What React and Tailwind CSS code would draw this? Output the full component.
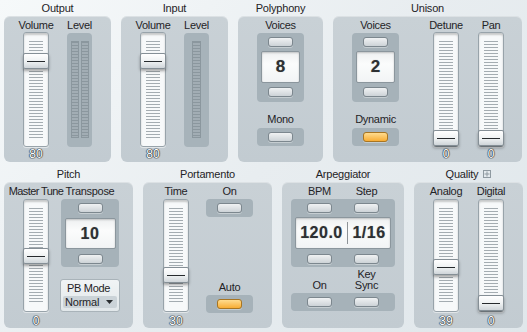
import React from "react";

const ticks =
  "bg-[image:repeating-linear-gradient(to_bottom,#a4acb1_0px,#a4acb1_1px,transparent_1px,transparent_3px)]";

const Label = ({ children, className = "" }) => (
  <span
    className={`h-[13px] leading-[13px] text-[11px] tracking-[-0.3px] text-[#1f2326] whitespace-nowrap ${className}`}
  >
    {children}
  </span>
);

const Value = ({ children, className = "" }) => (
  <span
    className={`leading-[13px] text-[12px] text-white [text-shadow:0_0_1px_#2f383e,0_0_1px_#2f383e,0_0_1px_#2f383e,0_0_1px_#2f383e] ${className}`}
  >
    {children}
  </span>
);

const Fader = ({ label, value, knob, tall, labelClass = "" }) => (
  <div className="flex flex-col items-center w-[26px]">
    <Label className={labelClass}>{label}</Label>
    <div
      className={`relative w-[26px] ${
        tall ? "h-[115px]" : "h-[113px] mt-[1px]"
      } rounded-[3px] border border-[#98a3aa] bg-[#f7f9fa] shadow-[inset_0_2px_2px_rgba(0,0,0,0.2),0_1px_0_rgba(255,255,255,0.5)]`}
    >
      <div className={`absolute left-[5px] right-[5px] top-[8px] bottom-[8px] ${ticks}`} />
      <div
        className="absolute left-[-1px] w-[26px] h-[16px] flex items-center justify-center rounded-[2px] border border-[#858f96] bg-[linear-gradient(to_bottom,#ffffff,#eef1f2_55%,#cfd5d9)] shadow-[0_2px_3px_rgba(0,0,0,0.35)]"
        style={{ top: knob }}
      >
        <div className="h-px w-[18px] bg-[#262a2d]" />
      </div>
    </div>
    <Value className={tall ? "mt-[1px]" : "mt-[3px]"}>{value}</Value>
  </div>
);

const Btn = ({ on }) => (
  <div
    className={`w-[25px] h-[10px] rounded-[3px] border ${
      on
        ? "border-[#a87522] bg-[linear-gradient(to_bottom,#ffdc8f,#f8ad35)]"
        : "border-[#7c878e] bg-[linear-gradient(to_bottom,#f0f2f3,#cdd3d7)]"
    } shadow-[0_1px_0_rgba(255,255,255,0.35)]`}
  />
);

const BtnBox = ({ on }) => (
  <div className="w-[47px] h-[18px] rounded-[4px] bg-[#a6b2b9] flex items-center justify-center">
    <Btn on={on} />
  </div>
);

const Display = ({ className = "", children }) => (
  <div
    className={`rounded-[2px] border border-[#8b969d] bg-[linear-gradient(to_bottom,#eef0f1,#fbfcfc_40%,#f2f4f5)] shadow-[inset_0_1px_2px_rgba(0,0,0,0.2)] flex items-center justify-center font-bold text-[#2d3033] [text-shadow:0_0_1px_rgba(0,0,0,0.35)] ${className}`}
  >
    {children}
  </div>
);

const Meter = ({ w }) => (
  <div
    className={`${w} h-[97px] border border-[#8b979e] bg-[#9aa6ad] bg-[image:repeating-linear-gradient(to_bottom,#8b979e_0px,#8b979e_1px,#a2adb4_1px,#a2adb4_3px)]`}
  />
);

const Level = ({ two }) => (
  <div className="flex flex-col items-center w-[25px]">
    <Label>Level</Label>
    <div className="mt-[1px] w-[25px] h-[114px] rounded-[4px] bg-[#a7b3ba] flex justify-center gap-[2px] pt-[8px]">
      {two ? (
        <>
          <Meter w="w-[8px]" />
          <Meter w="w-[8px]" />
        </>
      ) : (
        <Meter w="w-[9px]" />
      )}
    </div>
  </div>
);

const Voices = ({ value, bottomLabel, on }) => (
  <div className="flex flex-col items-center w-[47px]">
    <Label>Voices</Label>
    <div className="mt-[1px] w-[47px] h-[69px] rounded-[4px] bg-[#a6b2b9] flex flex-col items-center pt-[4px] gap-[4px]">
      <Btn />
      <Display className="w-[39px] h-[32px] text-[17px]">{value}</Display>
      <Btn />
    </div>
    <Label className="mt-[11px]">{bottomLabel}</Label>
    <div className="mt-[2px]">
      <BtnBox on={on} />
    </div>
  </div>
);

const Section = ({ title, width, children, panelClass = "" }) => (
  <div className={`flex flex-col ${width}`}>
    <div className="h-[16px] leading-[16px] text-[11px] tracking-[-0.2px] text-[#1f2326] text-center flex items-center justify-center gap-[5px]">
      {title}
    </div>
    <div
      className={`h-[146px] rounded-[6px] bg-[linear-gradient(to_bottom,#c9d1d6,#c2cbd1)] shadow-[inset_0_1px_0_rgba(255,255,255,0.35)] pt-[3px] ${panelClass}`}
    >
      {children}
    </div>
  </div>
);

export default function App() {
  return (
    <div className="w-[527px] h-[332px] overflow-hidden bg-[linear-gradient(135deg,#f6f9fa,#e8edf0_50%,#e0e7eb)] font-['Liberation_Sans',Arial,sans-serif] pl-[4px]">
      <div className="flex gap-[10px]">
        <Section title="Output" width="w-[107px]" panelClass="flex pl-[19px] gap-[18px]">
          <Fader label="Volume" value="80" knob={20} tall />
          <Level two />
        </Section>
        <Section title="Input" width="w-[107px]" panelClass="flex pl-[19px] gap-[18px]">
          <Fader label="Volume" value="80" knob={20} tall />
          <Level />
        </Section>
        <Section title="Polyphony" width="w-[85px]" panelClass="flex justify-center">
          <Voices value="8" bottomLabel="Mono" />
        </Section>
        <Section title="Unison" width="w-[189px]" panelClass="flex pl-[19px]">
          <Voices value="2" bottomLabel="Dynamic" on />
          <div className="ml-[34px]">
            <Fader label="Detune" value="0" knob={97} tall />
          </div>
          <div className="ml-[19px]">
            <Fader label="Pan" value="0" knob={97} tall />
          </div>
        </Section>
      </div>

      <div className="flex gap-[10px] mt-[4px]">
        <Section title="Pitch" width="w-[129px]" panelClass="flex pl-[19px]">
          <Fader label="Master Tune" value="0" knob={48} labelClass="!tracking-[-0.6px] text-[10.5px]" />
          <div className="ml-[12px] w-[58px] flex flex-col items-center">
            <Label>Transpose</Label>
            <div className="mt-[1px] w-[58px] h-[68px] rounded-[4px] bg-[#a6b2b9] flex flex-col items-center pt-[4px]">
              <Btn />
              <Display className="mt-[5px] w-[51px] h-[31px] text-[16px] tracking-[0.5px]">10</Display>
              <div className="mt-[5px]">
                <Btn />
              </div>
            </div>
            <div className="mt-[12px] w-[60px] h-[33px] shrink-0 rounded-[3px] border border-[#a9b3b9] bg-[linear-gradient(to_bottom,#f1f4f5,#e1e7ea)] px-[2px] pt-[2px]">
              <div className="pl-[4px] h-[12px] leading-[12px] text-[11px] tracking-[-0.3px] text-[#1f2326]">PB Mode</div>
              <div className="mt-[2px] h-[12px] rounded-[2px] bg-[#cbd3d8] flex items-center justify-between pl-[2px] pr-[4px]">
                <span className="text-[11px] tracking-[-0.2px] leading-[12px] text-[#1f2326]">Normal</span>
                <svg width="7" height="4" viewBox="0 0 7 4">
                  <path d="M0 0H7L3.5 4Z" fill="#2a2e31" />
                </svg>
              </div>
            </div>
          </div>
        </Section>

        <Section title="Portamento" width="w-[129px]" panelClass="flex pl-[20px]">
          <Fader label="Time" value="30" knob={67} />
          <div className="ml-[17px] w-[47px] flex flex-col items-center">
            <Label>On</Label>
            <div className="mt-[1px]">
              <BtnBox />
            </div>
            <Label className="mt-[64px]">Auto</Label>
            <div className="mt-[1px]">
              <BtnBox on />
            </div>
          </div>
        </Section>

        <Section title="Arpeggiator" width="w-[122px]" panelClass="pl-[9px]">
          <div className="w-[104px] flex flex-col">
            <div className="flex pl-[16px] gap-[22px]">
              <div className="w-[25px] flex justify-center">
                <Label>BPM</Label>
              </div>
              <div className="w-[25px] flex justify-center">
                <Label>Step</Label>
              </div>
            </div>
            <div className="mt-[1px] h-[68px] rounded-[4px] bg-[#a6b2b9] pt-[4px] flex flex-col">
              <div className="flex pl-[16px] gap-[22px]">
                <Btn />
                <Btn />
              </div>
              <Display className="mt-[4px] mx-[4px] h-[32px] text-[16px] tracking-[0.5px] !justify-start">
                <div className="w-[51px] text-center">120.0</div>
                <div className="w-px h-[22px] bg-[#8e9397]" />
                <div className="flex-1 text-center">1/16</div>
              </Display>
              <div className="mt-[5px] flex pl-[16px] gap-[22px]">
                <Btn />
                <Btn />
              </div>
            </div>
            <div className="mt-[2px] flex pl-[16px] gap-[22px] items-end text-[11px] tracking-[-0.3px] leading-[11px] text-[#1f2326]">
              <div className="w-[25px] text-center">On</div>
              <div className="w-[25px] flex flex-col items-center">
                <span>Key</span>
                <span>Sync</span>
              </div>
            </div>
            <div className="mt-[2px] h-[18px] rounded-[4px] bg-[#a6b2b9] flex items-center pl-[16px] gap-[22px]">
              <Btn />
              <Btn />
            </div>
          </div>
        </Section>

        <Section
          title={
            <>
              <span>Quality</span>
              <svg width="8" height="8" viewBox="0 0 8 8">
                <rect x="0.5" y="0.5" width="7" height="7" fill="none" stroke="#8f9aa1" />
                <path d="M4 1.5V6.5M1.5 4H6.5" stroke="#8f9aa1" />
              </svg>
            </>
          }
          width="w-[109px]"
          panelClass="flex pl-[19px]"
        >
          <Fader label="Analog" value="39" knob={59} />
          <div className="ml-[19px]">
            <Fader label="Digital" value="0" knob={95} />
          </div>
        </Section>
      </div>
    </div>
  );
}
